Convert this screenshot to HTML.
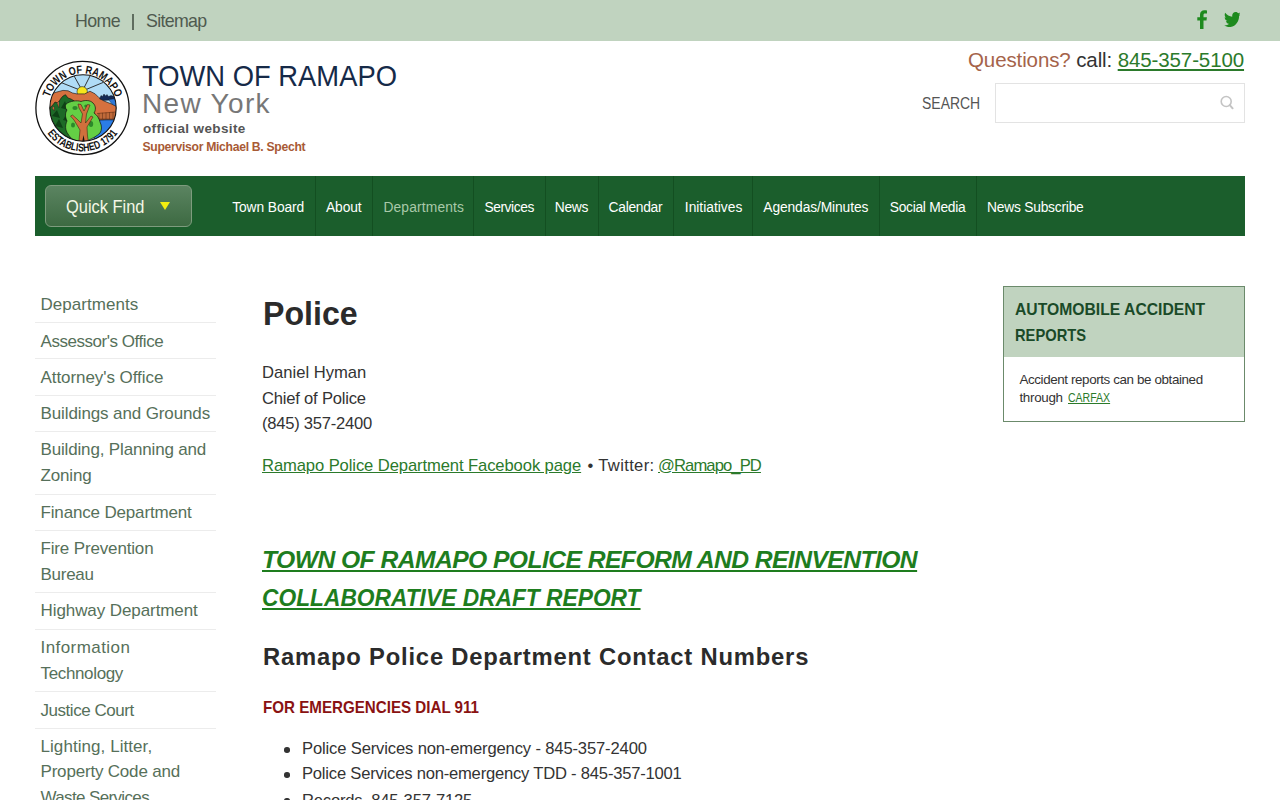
<!DOCTYPE html>
<html><head><meta charset="utf-8">
<style>
*{box-sizing:border-box;margin:0;padding:0}
html,body{width:1280px;height:800px;overflow:hidden;background:#fff;font-family:"Liberation Sans",sans-serif;color:#333}
a{color:inherit;text-decoration:none}
.a{position:absolute;white-space:nowrap;line-height:1}
.lk{color:#2b7a2b;text-decoration:underline}
#topbar{position:absolute;left:0;top:0;width:1280px;height:41px;background:#c0d3bf}
#pipe{position:absolute;left:131.5px;top:14px;width:2px;height:16px;background:#5f6d5f}
#logo{position:absolute;left:30px;top:56px;width:106px;height:106px}
#fb{position:absolute;left:1197px;top:9.5px;width:11px;height:19px}
#tw{position:absolute;left:1223.5px;top:12.2px;width:16.8px;height:15.2px}
#search{position:absolute;left:995px;top:83px;width:250px;height:40px;border:1px solid #e3e3e3;background:#fff}
#sicon{position:absolute;left:1218px;top:94px;width:18px;height:18px}
#nav{position:absolute;left:35px;top:176px;width:1210px;height:60px;background:#1b5e2c}
#qf{position:absolute;left:45px;top:185px;width:147px;height:42px;border-radius:6px;border:1px solid #7e9c7e;background:linear-gradient(#5b8461,#3d6a42)}
#tri{position:absolute;left:160px;top:202px;width:0;height:0;border-left:5px solid transparent;border-right:5px solid transparent;border-top:8px solid #f2ee10}
.sep{position:absolute;top:176px;width:1px;height:60px;background:#134f21}
.sl{position:absolute;left:35px;width:181px;height:1px;background:#ececec}
.bul{position:absolute;left:284.2px;width:5.6px;height:5.6px;border-radius:50%;background:#333}
#box{position:absolute;left:1003px;top:286px;width:242px;height:136px;border:1px solid #6b8a6b}
#boxh{position:absolute;left:1004px;top:287px;width:240px;height:70px;background:#c0d3bf}
</style></head><body>
<div id="topbar"></div>
<div id="pipe"></div>
<svg id="fb" viewBox="0 0 11 19"><path d="M3 19V10.5H0.3V7.3H3V4.8C3 1.9 4.8 0.3 7.4 0.3C8.6 0.3 9.7 0.4 10 0.5V3.4H8.2C6.8 3.4 6.5 4.1 6.5 5.1V7.3H9.9L9.5 10.5H6.5V19Z" fill="#1e8a1e"/></svg>
<svg id="tw" viewBox="0 47 512 420" preserveAspectRatio="none"><path fill="#1e8a1e" d="M459.37 151.716c.325 4.548.325 9.097.325 13.645 0 138.72-105.583 298.558-298.558 298.558-59.452 0-114.68-17.219-161.137-47.106 8.447.974 16.568 1.299 25.34 1.299 49.055 0 94.213-16.568 130.274-44.832-46.132-.975-84.792-31.188-98.112-72.772 6.498.974 12.995 1.624 19.818 1.624 9.421 0 18.843-1.3 27.614-3.573-48.081-9.747-84.143-51.98-84.143-102.985v-1.299c13.969 7.797 30.214 12.67 47.431 13.319-28.264-18.843-46.781-51.005-46.781-87.391 0-19.492 5.197-37.36 14.294-52.954 51.655 63.675 129.3 105.258 216.365 109.807-1.624-7.797-2.599-15.918-2.599-24.04 0-57.828 46.782-104.934 104.934-104.934 30.213 0 57.502 12.67 76.67 33.137 23.715-4.548 46.456-13.32 66.599-25.34-7.798 24.366-24.366 44.833-46.132 57.827 21.117-2.273 41.584-8.122 60.426-16.243-14.292 20.791-32.161 39.308-52.628 54.253z"/></svg>

<svg id="logo" viewBox="0 0 106 106">
 <defs>
  <clipPath id="disc"><circle cx="53" cy="52" r="33.2"/></clipPath>
  <path id="arcTop" d="M18 52 A34.5 34.5 0 0 1 87 52"/>
  <path id="arcBot" d="M9.2 52 A43.3 43.3 0 0 0 95.8 52"/>
 </defs>
 <circle cx="52.5" cy="52" r="46.6" fill="#fff" stroke="#111" stroke-width="1.3"/>
 <g clip-path="url(#disc)">
  <rect x="0" y="0" width="106" height="106" fill="#b0dcf6"/>
  <g stroke="#222" stroke-width="0.9">
   <line x1="52.4" y1="35" x2="43" y2="18"/><line x1="52.4" y1="35" x2="61" y2="18"/>
   <line x1="52.4" y1="35" x2="31" y2="26.5"/><line x1="52.4" y1="35" x2="73" y2="26.5"/>
  </g>
  <circle cx="52.2" cy="35.8" r="5.2" fill="#f7e51c" stroke="#222" stroke-width="0.6"/>
  <path d="M17 39 L20.6 37.9 L26.7 36.1 L32.9 34.4 L38.1 34.8 L42.5 37 L46.9 37.9 L54.7 37.9 L60 35.2 L65.2 37.9 L68.7 41.4 L74 45 L86.5 50 L87 64 L66 64 L60 70 L30 70 L17 60Z" fill="#d6713f" stroke="#222" stroke-width="0.7"/>
  <path d="M69.6 43 L71 39.5 L72.5 40.5 L74 38 L75.5 40 L77 38.5 L78.5 40.5 L81 39.5 L87 41 L87 43.5 L80 44 L74 44.5Z" fill="#142a55" stroke="#111" stroke-width="0.4"/>
  <path d="M78.5 43.5 L87 42.5 L87 51 L82 48Z" fill="#2f78d8" stroke="#111" stroke-width="0.4"/>
  <path d="M67 57 L86 55.5 L87 63.2 L67 63.2Z" fill="#c06a3a"/>
  <g stroke="#5a2a12" stroke-width="0.5"><line x1="67" y1="57.5" x2="86" y2="56"/><line x1="69" y1="57" x2="69" y2="63"/><line x1="72.5" y1="56.8" x2="72.5" y2="63"/><line x1="76" y1="56.5" x2="76" y2="63"/><line x1="79.5" y1="56.2" x2="79.5" y2="63"/><line x1="83" y1="56" x2="83" y2="63"/><line x1="67" y1="63" x2="87" y2="63"/></g>
  <path d="M63 66 C66 64 74 63.5 87 64 L87 90 L62 88 C64 82 67 78 65 74 C63 71 62 68 63 66Z" fill="#2b7de6" stroke="#111" stroke-width="0.6"/>
  <path d="M18 53 L22 50 L25 46 L28 47 L31 42.2 L33 40 L35.5 38.7 L38 42 L41 43 L44.2 44.9 L43 60 L40 84.2 L30 86 L17 80Z" fill="#1d6a27" stroke="#111" stroke-width="0.6"/>
  <path d="M22 52 L24 50 L24.5 55 Z M27 47 L29 45 L29 52Z" fill="#d6713f" stroke="#222" stroke-width="0.4"/>
  <g fill="#0e4216"><path d="M22 60 L27 54 L30 62Z"/><path d="M31 52 L35 45 L38 54Z"/><path d="M25 70 L29 63 L33 72Z"/><path d="M33 64 L37 57 L40 66Z"/></g>
  <path d="M36 48 C40 45 47 44 51 45.5 C55 44 60 44 63 47 C66 50 66 54 64 57 C67 59 69 62 70 66 C72 70 72 74 70 77 C67 80 63 82 59 84 L49 86 C44 85 40 82 38 78 C35 74 35 69 37 65 C35 61 35 57 37 54 C35 52 35 50 36 48Z" fill="#64cf45" stroke="#111" stroke-width="0.7"/>
  <g fill="#2c8a2a"><ellipse cx="45" cy="52" rx="2.6" ry="2"/><ellipse cx="61" cy="68" rx="2.2" ry="3"/><ellipse cx="43" cy="69" rx="2" ry="2.6"/><ellipse cx="56" cy="50" rx="1.8" ry="1.6"/></g>
  <path d="M48.5 90 L50 74 L44 64 L40.5 60 L42.5 59 L47 63 L51 67 L52.5 58 L49 52 L48 48 L51 48.5 L54 55 L57.5 48.5 L60 49 L56.5 58 L55.5 67 L61 60 L63 61 L57 71 L57.5 80 L59 90Z" fill="#d0703c" stroke="#3a2010" stroke-width="0.55"/>
  <path d="M51.5 90 L53.5 79 L55.5 90Z" fill="#111"/>
 </g>
 <circle cx="53" cy="52" r="33.2" fill="none" stroke="#111" stroke-width="1.1"/>
 <text font-family="Liberation Sans" font-size="11.4" font-weight="bold" fill="#111"><textPath href="#arcTop" startOffset="50%" text-anchor="middle" textLength="87" lengthAdjust="spacingAndGlyphs">TOWN OF RAMAPO</textPath></text>
 <text font-family="Liberation Sans" font-size="11.2" font-weight="bold" fill="#111"><textPath href="#arcBot" startOffset="50%" text-anchor="middle" textLength="82" lengthAdjust="spacingAndGlyphs">ESTABLISHED 1791</textPath></text>
</svg>

<div id="search"></div>
<svg id="sicon" viewBox="0 0 18 18"><circle cx="8.2" cy="7.5" r="5" fill="none" stroke="#c4c4c4" stroke-width="1.6"/><line x1="11.8" y1="11.1" x2="14.6" y2="14.3" stroke="#c4c4c4" stroke-width="2" stroke-linecap="round"/></svg>

<div id="nav"></div>
<div id="qf"></div>
<div id="tri"></div>
<div class="sep" style="left:315px"></div>
<div class="sep" style="left:372px"></div>
<div class="sep" style="left:473px"></div>
<div class="sep" style="left:545px"></div>
<div class="sep" style="left:598px"></div>
<div class="sep" style="left:673px"></div>
<div class="sep" style="left:752px"></div>
<div class="sep" style="left:879px"></div>
<div class="sep" style="left:976px"></div>

<div class="sl" style="top:322px"></div>
<div class="sl" style="top:358px"></div>
<div class="sl" style="top:395px"></div>
<div class="sl" style="top:431px"></div>
<div class="sl" style="top:494px"></div>
<div class="sl" style="top:530px"></div>
<div class="sl" style="top:592px"></div>
<div class="sl" style="top:629px"></div>
<div class="sl" style="top:691px"></div>
<div class="sl" style="top:728px"></div>

<div class="bul" style="top:747px"></div>
<div class="bul" style="top:772.2px"></div>
<div class="bul" style="top:797.5px"></div>

<div id="box"></div>
<div id="boxh"></div>
<div id="home" class="a" style="left:75px;top:12.93px;font-size:17.8px;letter-spacing:-0.617px;color:#4f5a4f">Home</div>
<div id="sitemap" class="a" style="left:146px;top:12.93px;font-size:17.8px;letter-spacing:-0.667px;color:#4f5a4f">Sitemap</div>
<div id="town" class="a" style="left:142px;top:62.45px;font-size:29px;letter-spacing:0.000px;transform:scaleX(0.9438);transform-origin:0 0;color:#162a48">TOWN OF RAMAPO</div>
<div id="ny" class="a" style="left:142px;top:90.10px;font-size:28px;letter-spacing:1.326px;color:#777">New York</div>
<div id="off" class="a" style="left:143px;top:121.57px;font-size:13.5px;letter-spacing:0.367px;font-weight:bold;color:#555">official website</div>
<div id="sup" class="a" style="left:142.5px;top:140.97px;font-size:12.2px;letter-spacing:-0.306px;font-weight:bold;color:#a85a35">Supervisor Michael B. Specht</div>
<div id="q" class="a" style="left:968px;top:49.65px;font-size:20.5px;letter-spacing:-0.110px;color:#333"><span style="color:#a5634a">Questions?</span> call: <a style="color:#2b7a2b;text-decoration:underline">845-357-5100</a></div>
<div id="srch" class="a" style="left:922px;top:94.57px;font-size:17.4px;letter-spacing:0.000px;transform:scaleX(0.8031);transform-origin:0 0;color:#555">SEARCH</div>
<div id="qft" class="a" style="left:66px;top:197.69px;font-size:18.2px;letter-spacing:0.000px;transform:scaleX(0.9031);transform-origin:0 0;color:#f4f7e6">Quick Find</div>
<div id="nav0" class="a" style="left:232.2px;top:200.62px;font-size:13.8px;letter-spacing:-0.092px;color:#fff">Town Board</div>
<div id="nav1" class="a" style="left:326px;top:200.62px;font-size:13.8px;letter-spacing:-0.125px;color:#fff">About</div>
<div id="nav2" class="a" style="left:383.4px;top:200.62px;font-size:13.8px;letter-spacing:0.160px;color:#a9c9a9">Departments</div>
<div id="nav3" class="a" style="left:484.4px;top:200.62px;font-size:13.8px;letter-spacing:-0.429px;color:#fff">Services</div>
<div id="nav4" class="a" style="left:554.7px;top:200.62px;font-size:13.8px;letter-spacing:-0.232px;color:#fff">News</div>
<div id="nav5" class="a" style="left:608.6px;top:200.62px;font-size:13.8px;letter-spacing:-0.297px;color:#fff">Calendar</div>
<div id="nav6" class="a" style="left:684.8px;top:200.62px;font-size:13.8px;letter-spacing:0.000px;color:#fff">Initiatives</div>
<div id="nav7" class="a" style="left:763.3px;top:200.62px;font-size:13.8px;letter-spacing:-0.110px;color:#fff">Agendas/Minutes</div>
<div id="nav8" class="a" style="left:889.8px;top:200.62px;font-size:13.8px;letter-spacing:-0.287px;color:#fff">Social Media</div>
<div id="nav9" class="a" style="left:987px;top:200.62px;font-size:13.8px;letter-spacing:-0.223px;color:#fff">News Subscribe</div>
<div id="side0" class="a" style="left:40.5px;top:295.51px;font-size:17px;letter-spacing:0.040px;color:#56705a">Departments</div>
<div id="side1" class="a" style="left:40.5px;top:333.21px;font-size:17px;letter-spacing:-0.458px;color:#56705a">Assessor's Office</div>
<div id="side2" class="a" style="left:40.5px;top:368.71px;font-size:17px;letter-spacing:-0.065px;color:#56705a">Attorney's Office</div>
<div id="side3" class="a" style="left:40.5px;top:404.61px;font-size:17px;letter-spacing:-0.115px;color:#56705a">Buildings and Grounds</div>
<div id="side4" class="a" style="left:40.5px;top:441.46px;font-size:17px;letter-spacing:-0.160px;color:#56705a">Building, Planning and</div>
<div id="side5" class="a" style="left:40.5px;top:466.71px;font-size:17px;letter-spacing:-0.160px;color:#56705a">Zoning</div>
<div id="side6" class="a" style="left:40.5px;top:504.11px;font-size:17px;letter-spacing:-0.161px;color:#56705a">Finance Department</div>
<div id="side7" class="a" style="left:40.5px;top:539.61px;font-size:17px;letter-spacing:-0.153px;color:#56705a">Fire Prevention</div>
<div id="side8" class="a" style="left:40.5px;top:565.51px;font-size:17px;letter-spacing:-0.260px;color:#56705a">Bureau</div>
<div id="side9" class="a" style="left:40.5px;top:601.71px;font-size:17px;letter-spacing:-0.082px;color:#56705a">Highway Department</div>
<div id="side10" class="a" style="left:40.5px;top:639.41px;font-size:17px;letter-spacing:0.430px;color:#56705a">Information</div>
<div id="side11" class="a" style="left:40.5px;top:665.31px;font-size:17px;letter-spacing:-0.352px;color:#56705a">Technology</div>
<div id="side12" class="a" style="left:40.5px;top:701.71px;font-size:17px;letter-spacing:-0.458px;color:#56705a">Justice Court</div>
<div id="side13" class="a" style="left:40.5px;top:737.96px;font-size:17px;letter-spacing:0.064px;color:#56705a">Lighting, Litter,</div>
<div id="side14" class="a" style="left:40.5px;top:763.31px;font-size:17px;letter-spacing:-0.190px;color:#56705a">Property Code and</div>
<div id="side15" class="a" style="left:40.5px;top:789.11px;font-size:17px;letter-spacing:-0.636px;color:#56705a">Waste Services</div>
<div id="h1" class="a" style="left:263px;top:296.22px;font-size:34px;letter-spacing:0.000px;transform:scaleX(0.9457);transform-origin:0 0;font-weight:bold;color:#2b2b2b">Police</div>
<div id="p1" class="a" style="left:262px;top:365.05px;font-size:16.6px;letter-spacing:0.007px;color:#333">Daniel Hyman</div>
<div id="p2" class="a" style="left:262px;top:390.75px;font-size:16.6px;letter-spacing:-0.209px;color:#333">Chief of Police</div>
<div id="p3" class="a" style="left:262px;top:415.70px;font-size:16.6px;letter-spacing:-0.252px;color:#333">(845) 357-2400</div>
<div id="links" class="a" style="left:262px;top:457.75px;font-size:16.6px;letter-spacing:-0.098px;color:#333"><a class="lk">Ramapo Police Department Facebook page</a></div>
<div id="twit" class="a" style="left:587.5px;top:457.75px;font-size:16.6px;letter-spacing:0.335px;color:#333">&bull; Twitter:</div>
<div id="lk2" class="a" style="left:658px;top:457.75px;font-size:16.6px;letter-spacing:-0.890px;color:#333"><a class="lk">@Ramapo_PD</a></div>
<div id="rep1" class="a" style="left:262px;top:547.89px;font-size:24.7px;letter-spacing:-0.572px;font-weight:bold;font-style:italic;color:#1e7d1e;text-decoration:underline;text-decoration-thickness:2px;text-underline-offset:2px">TOWN OF RAMAPO POLICE REFORM AND REINVENTION</div>
<div id="rep2" class="a" style="left:262px;top:586.19px;font-size:24.7px;letter-spacing:0.000px;transform:scaleX(0.9220);transform-origin:0 0;font-weight:bold;font-style:italic;color:#1e7d1e;text-decoration:underline;text-decoration-thickness:2px;text-underline-offset:2px">COLLABORATIVE DRAFT REPORT</div>
<div id="h2" class="a" style="left:263px;top:644.65px;font-size:23.8px;letter-spacing:0.795px;font-weight:bold;color:#2b2b2b">Ramapo Police Department Contact Numbers</div>
<div id="em" class="a" style="left:263px;top:698.87px;font-size:16.1px;letter-spacing:0.000px;transform:scaleX(0.9412);transform-origin:0 0;font-weight:bold;color:#8a1212">FOR EMERGENCIES DIAL 911</div>
<div id="li1" class="a" style="left:302px;top:741.25px;font-size:16.6px;letter-spacing:-0.151px;color:#333">Police Services non-emergency - 845-357-2400</div>
<div id="li2" class="a" style="left:302px;top:766.25px;font-size:16.6px;letter-spacing:-0.213px;color:#333">Police Services non-emergency TDD - 845-357-1001</div>
<div id="li3" class="a" style="left:302px;top:792.75px;font-size:16.6px;letter-spacing:-0.200px;color:#333">Records, 845-357-7125</div>
<div id="bh1" class="a" style="left:1014.5px;top:301.41px;font-size:17px;letter-spacing:0.000px;transform:scaleX(0.9239);transform-origin:0 0;font-weight:bold;color:#1a4a28">AUTOMOBILE ACCIDENT</div>
<div id="bh2" class="a" style="left:1014.5px;top:327.41px;font-size:17px;letter-spacing:0.000px;transform:scaleX(0.8640);transform-origin:0 0;font-weight:bold;color:#1a4a28">REPORTS</div>
<div id="bb1" class="a" style="left:1019.4px;top:373.11px;font-size:13.4px;letter-spacing:-0.389px;color:#333">Accident reports can be obtained</div>
<div id="bb2" class="a" style="left:1019.4px;top:391.36px;font-size:13.4px;letter-spacing:-0.297px;color:#333">through</div>
<div id="bb3" class="a" style="left:1067.9px;top:391.36px;font-size:13.4px;letter-spacing:0.000px;transform:scaleX(0.7859);transform-origin:0 0;color:#333"><a class="lk">CARFAX</a></div>

</body></html>
